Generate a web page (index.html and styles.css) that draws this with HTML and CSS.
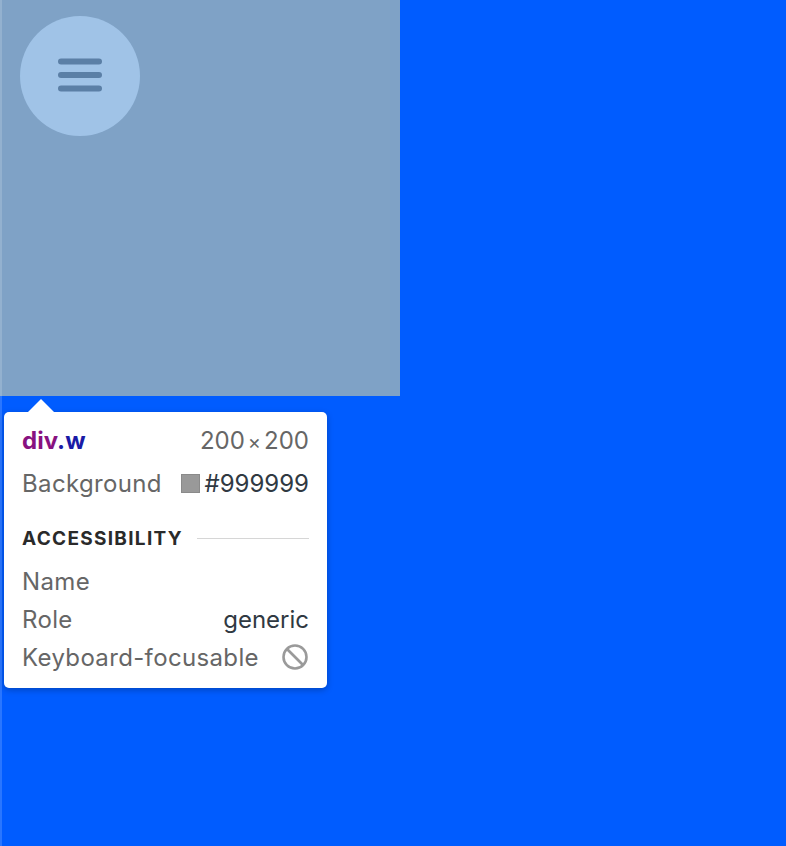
FILE: index.html
```html
<!DOCTYPE html>
<html>
<head>
<meta charset="utf-8">
<link rel="stylesheet" href="styles.css">
</head>
<body>
<div class="strip"></div>
<div class="w">
  <div class="fab">
    <svg width="44" height="34" viewBox="0 0 44 34"><g stroke="#5b7fa6" stroke-width="6" stroke-linecap="round"><line x1="3" y1="3.5" x2="41" y2="3.5"/><line x1="3" y1="17" x2="41" y2="17"/><line x1="3" y1="30.5" x2="41" y2="30.5"/></g></svg>
  </div>
</div>
<div class="tip">
  <div class="row head"><span class="sel"><span class="tag">div</span><span class="cls">.w</span></span><span class="dim">200<span class="x">×</span>200</span></div>
  <div class="row head"><span class="lbl">Background</span><span class="val"><span class="sw"></span>#999999</span></div>
  <div class="sec"><span>ACCESSIBILITY</span><span class="rule"></span></div>
  <div class="row"><span class="lbl">Name</span><span class="val"></span></div>
  <div class="row"><span class="lbl">Role</span><span class="val">generic</span></div>
  <div class="row"><span class="lbl">Keyboard-focusable</span><span class="val"><svg width="28" height="28" viewBox="0 0 28 28"><g fill="none" stroke="#9a9a9a" stroke-width="2.6"><circle cx="14" cy="14" r="11.5"/><line x1="6" y1="6" x2="22" y2="22"/></g></svg></span></div>
</div>
</body>
</html>
```
FILE: styles.css
```css
html, body { margin: 0; padding: 0; }
body {
  background: #005cff;
  width: 786px;
  height: 846px;
  position: relative;
  overflow: hidden;
  font-family: "Inter", "Liberation Sans", sans-serif;
}
.strip {
  position: absolute;
  left: 0; top: 0;
  width: 2px; height: 846px;
  background: rgba(255,255,255,0.16);
  z-index: 2;
}
.w {
  width: 400px;
  height: 396px;
  background: #7fa2c6;
  padding: 16px 0 0 20px;
  box-sizing: border-box;
}
.fab {
  width: 120px; height: 120px;
  border-radius: 50%;
  background: #a0c3e7;
  display: flex;
  align-items: center;
  justify-content: center;
}
.fab svg { margin-top: -2px; }
.tip {
  position: absolute;
  left: 4px; top: 412px;
  width: 323px; height: 276px;
  box-sizing: border-box;
  background: #fff;
  border-radius: 5px;
  box-shadow: 0 2px 6px rgba(0,0,0,0.25);
  padding: 7px 18px 12px 18px;
  color: #666;
  font-size: 24px;
  letter-spacing: 0.35px;
}
.tip::before {
  content: "";
  position: absolute;
  left: 24px; top: -13px;
  border-left: 13px solid transparent;
  border-right: 13px solid transparent;
  border-bottom: 13px solid #fff;
}
.row {
  display: flex;
  justify-content: space-between;
  align-items: center;
  height: 38px;
}
.row.head { height: 43px; }
.sel { font-weight: 700; letter-spacing: 0; }
.tag { color: #881280; }
.cls { color: #1a1aa6; }
.dim { color: #666; letter-spacing: 0; }
.x { margin: 0 3px; font-size: 20px; }
.lbl { color: #666; }
.val { color: #303942; display: flex; align-items: center; letter-spacing: 0; }
.sw {
  width: 19px; height: 19px;
  background: #999;
  border: 1px solid #8a8a8a;
  box-sizing: border-box;
  margin-right: 5px;
}
.sec {
  display: flex;
  align-items: center;
  margin: 21px 0 12px;
  height: 24px;
  color: #2a2a2a;
  font-size: 19px;
  font-weight: 700;
  letter-spacing: 1.3px;
}
.rule {
  flex: 1;
  height: 1px;
  background: #d6d6d6;
  margin-left: 14px;
}
```
